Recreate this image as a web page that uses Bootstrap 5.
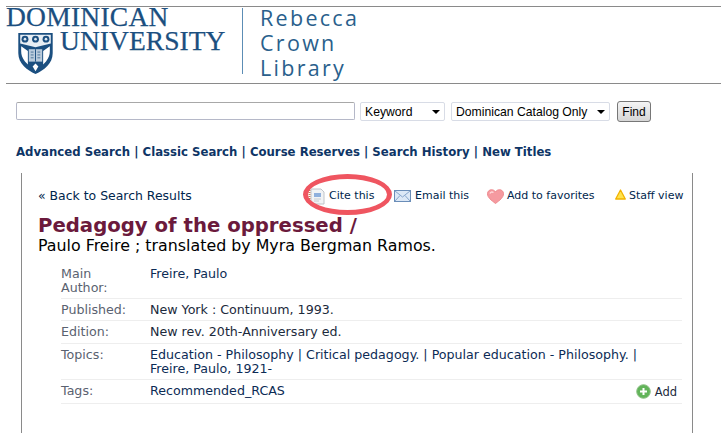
<!DOCTYPE html>
<html lang="en"><head><meta charset="utf-8"><title>Pedagogy of the oppressed</title>
<link href="https://cdn.jsdelivr.net/npm/bootstrap@5.3.0/dist/css/bootstrap.min.css" rel="stylesheet">
<style>
html,body{height:433px;overflow:hidden}
body{background:#fff;font-family:"DejaVu Sans",Verdana,sans-serif;font-size:11px;color:#00264d;position:relative}
a{color:inherit;text-decoration:none}
.masthead{margin:6px 0 0 6px;height:78px;border-top:1px solid #8a8a8a;border-bottom:1px solid #8a8a8a}
.brand-name{width:218px;color:#1b4f80;font-family:"Liberation Serif",serif;line-height:24px;padding-top:0;flex:none}
.brand-top{font-size:27.5px;letter-spacing:.25px;height:24px;white-space:nowrap;margin-top:-2px;-webkit-text-stroke:.25px #1b4f80}
.brand-bottom{font-size:27.5px;letter-spacing:.05px;padding-left:54px;height:24px;white-space:nowrap;-webkit-text-stroke:.25px #1b4f80}
.crest{position:absolute;left:17px;top:32px}
.brand-rule{width:1px;height:66px;background:#5c8db5;margin:1px 0 0 18px}
.lib-name{color:#2a5f8c;font-family:"Open Sans",sans-serif;font-size:21.5px;letter-spacing:2.3px;line-height:25px;margin:-2px 0 0 17px}
.search-row{margin:17px 0 0 16px;height:22px}
.q-box{width:339px;height:18px;border:1px solid #b5b8c8;border-top-color:#a8a8a8;margin-right:5px;border-radius:2px;margin-top:1px}
.pick{height:19px;margin-top:1px;font:12.2px "Liberation Sans",sans-serif;color:#000;border:1px solid #d8dce6;border-radius:2px;display:flex;align-items:center;justify-content:space-between;padding:0 3px 0 4px}
.pick-kw{width:85px;margin-right:6px}
.pick-cat{width:159px;margin-right:7px}
.caret-mark{width:0;height:0;border:4px solid transparent;border-top:4px solid #000;border-bottom:0;margin-right:1px}
.find-btn{width:34px;height:21px;padding:0;font:12px "Liberation Sans",sans-serif;color:#000;background:linear-gradient(#f4f4f4,#d6d6d6);border:1px solid #777;border-radius:3px}
.sublinks{margin:22px 0 0 16px;font-weight:700;font-size:11.72px;line-height:14px;color:#0e3566;white-space:nowrap}
.panel-box{margin:14px 0 0 21px;width:672px;height:270px;border-left:1px solid #8a8a8a;border-right:1px solid #8a8a8a;padding:16px 5px 0 16px}
.tools-row{height:14px;line-height:14px}
.back-link{font-size:12.45px;width:270px;flex:none;white-space:nowrap}
.tool{display:flex;align-items:center;white-space:nowrap;font-size:11px}
.tool-cite{width:86px}.tool-mail{width:93px}.tool-fav{width:128px}
.book-title{font-size:19.7px;font-weight:700;color:#6b1a3c;line-height:21px;margin:12px 0 0;white-space:nowrap}
.book-author{font-size:15.85px;color:#000;line-height:20px;white-space:nowrap}
.facts{margin:6.6px 0 0 23px;width:621px;font-size:12.65px;line-height:14px;color:#0c2b55}
.fact{display:flex;border-bottom:1px solid #eee;padding:4px 0 3.4px}
.fact-key{width:89px;flex:none;color:#5a6270}
.fact-plain{color:#1c2a3c}
.add-link{font-size:11.5px;margin-right:5px}
.ring{position:absolute;left:303px;top:174px;width:89px;height:41px;border:5px solid #ef5560;border-radius:50%;pointer-events:none}
</style></head><body>
<header class="masthead d-flex">
  <div class="brand-name"><div class="brand-top">DOMINICAN</div><div class="brand-bottom">UNIVERSITY</div></div>
  <div class="brand-rule"></div>
  <div class="lib-name">Rebecca<br>Crown<br>Library</div>
</header>
<svg class="crest" width="37" height="43" viewBox="0 0 38 45" aria-hidden="true">
  <path d="M1 1H37V22C37 33 28 40 19 44C10 40 1 33 1 22Z" fill="#1b4f80"/>
  <path d="M3 3H35V12L19 16L3 12Z" fill="#e8eef4"/>
  <circle cx="8" cy="7.5" r="3.6" fill="#1b4f80"/><circle cx="19" cy="7.5" r="3.6" fill="#1b4f80"/><circle cx="30" cy="7.5" r="3.6" fill="#1b4f80"/>
  <circle cx="8" cy="7.5" r="1.4" fill="#dfe8f0"/><circle cx="19" cy="7.5" r="1.4" fill="#dfe8f0"/><circle cx="30" cy="7.5" r="1.4" fill="#dfe8f0"/>
  <path d="M4 15L11 20V34L8 31C5 27 4 24 4 20ZM34 15L27 20V34L30 31C33 27 34 24 34 20Z" fill="#fff"/>
  <path d="M12 18H26V31H12Z" fill="#b9cbdc"/><path d="M19 18V31" stroke="#1b4f80"/>
  <path d="M14 21H17M14 24H17M14 27H17M21 21H24M21 24H24M21 27H24" stroke="#4c7499"/>
  <path d="M19 33L16 36L19 41L22 36Z" fill="#fff"/>
</svg>
<form class="search-row d-flex align-items-start">
  <div class="q-box"></div>
  <div class="pick pick-kw"><span>Keyword</span><i class="caret-mark"></i></div>
  <div class="pick pick-cat"><span>Dominican Catalog Only</span><i class="caret-mark"></i></div>
  <button type="button" class="find-btn">Find</button>
</form>
<nav class="sublinks"><a href="#">Advanced Search</a> | <a href="#">Classic Search</a> | <a href="#">Course Reserves</a> | <a href="#">Search History</a> | <a href="#">New Titles</a></nav>
<main class="panel-box">
  <div class="tools-row d-flex align-items-center">
    <a class="back-link" href="#">« Back to Search Results</a>
    <a class="tool tool-cite" href="#"><svg width="17" height="17" viewBox="0 0 17 17" class="me-1" aria-hidden="true"><path d="M3 1H13L16 4V16H3Z" fill="#f1f3f5" stroke="#bfc4c9"/><path d="M1.5 2V15" stroke="#c97b55" stroke-width="2" stroke-dasharray="1 1"/><path d="M6 5H13V9H6Z" fill="#8fb0dd"/><path d="M6 11H13M6 13H11" stroke="#c8ccd2"/></svg>Cite this</a>
    <a class="tool tool-mail" href="#"><svg width="17" height="12" viewBox="0 0 17 12" style="margin-right:4px" aria-hidden="true"><rect x=".5" y=".5" width="16" height="11" fill="#dce8f6" stroke="#6a8db8"/><path d="M1 1L8.5 7L16 1M1 11L6 5.5M16 11L11 5.5" fill="none" stroke="#86a5cc"/></svg>Email this</a>
    <a class="tool tool-fav" href="#"><svg width="17" height="15" viewBox="0 0 17 15" style="margin-right:3px" aria-hidden="true"><path d="M8.5 14.5C4 11 .5 8.5 .5 4.8C.5 2.2 2.5 .7 4.5 .7C6.2 .7 7.7 1.6 8.5 3C9.3 1.6 10.8 .7 12.5 .7C14.5 .7 16.5 2.2 16.5 4.8C16.5 8.5 13 11 8.5 14.5Z" fill="#f59aa0" stroke="#ee8b8f"/><path d="M3 4.5C3.5 3 5 2.7 6.5 3.5" stroke="#ffd9dc" stroke-width="1.4" fill="none"/></svg>Add to favorites</a>
    <a class="tool" href="#"><svg width="11" height="11" viewBox="0 0 11 11" style="margin-right:3px;margin-top:-3px" aria-hidden="true"><path d="M5.5 1L10.3 10H.7Z" fill="#ffe34d" stroke="#f2b200" stroke-width="1.3" stroke-linejoin="round"/></svg>Staff view</a>
  </div>
  <h1 class="book-title">Pedagogy of the oppressed /</h1>
  <div class="book-author">Paulo Freire ; translated by Myra Bergman Ramos.</div>
  <div class="facts">
    <div class="fact"><div class="fact-key">Main<br>Author:</div><div><a href="#">Freire, Paulo</a></div></div>
    <div class="fact"><div class="fact-key">Published:</div><div class="fact-plain">New York : Continuum, 1993.</div></div>
    <div class="fact"><div class="fact-key">Edition:</div><div class="fact-plain">New rev. 20th-Anniversary ed.</div></div>
    <div class="fact"><div class="fact-key">Topics:</div><div><a href="#">Education - Philosophy</a> | <a href="#">Critical pedagogy.</a> | <a href="#">Popular education - Philosophy.</a> |<br><a href="#">Freire, Paulo, 1921-</a></div></div>
    <div class="fact"><div class="fact-key">Tags:</div><div class="flex-grow-1 d-flex justify-content-between"><a href="#">Recommended_RCAS</a><a href="#" class="d-flex align-items-center fact-plain add-link"><svg width="15" height="15" viewBox="0 0 15 15" style="margin-right:4px" aria-hidden="true"><circle cx="7.5" cy="7.5" r="6.8" fill="#62b45a" stroke="#8cc084"/><path d="M7.5 4V11M4 7.5H11" stroke="#fff" stroke-width="2"/></svg>Add</a></div></div>
  </div>
</main>
<div class="ring"></div>
</body></html>
